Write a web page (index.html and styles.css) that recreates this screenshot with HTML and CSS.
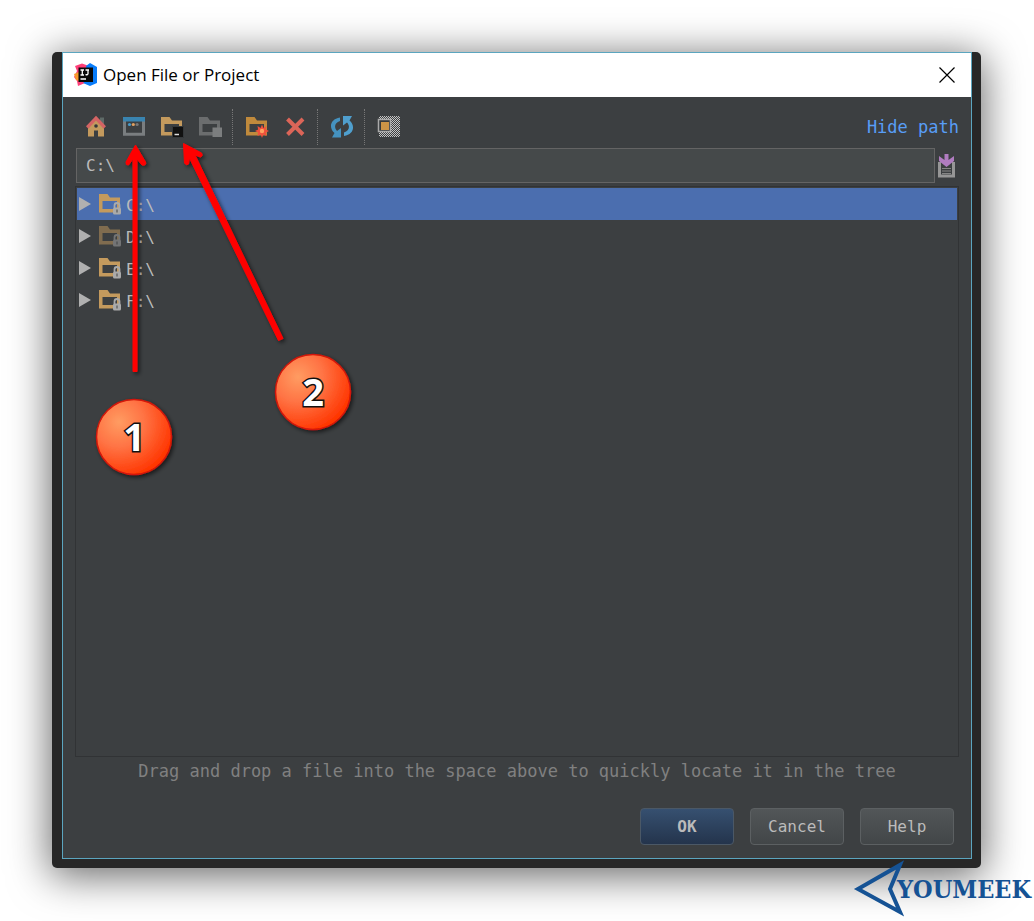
FILE: index.html
```html
<!DOCTYPE html>
<html lang="en">
<head>
<meta charset="utf-8">
<title>Open File or Project</title>
<link rel="stylesheet" href="styles.css">
</head>
<body>
<svg class="defs" aria-hidden="true">
  <defs>
    <symbol id="folder" viewBox="0 0 24 24">
      <path fill-rule="evenodd" d="M1 2H9.500L12 5.500H22V20.500H1ZM4.500 9V17H19V9Z"/>
    </symbol>
    <symbol id="lock" viewBox="0 0 10 13">
      <path d="M2.500 6V3.500a2.300 2.300 0 0 1 5 0V6" fill="none" stroke="#aaa" stroke-width="1.800"/>
      <rect x="1" y="5.500" width="8" height="7" rx="1.500" fill="#aaa"/>
      <path d="M5 7.500v3" stroke="#666" stroke-width="1.500"/>
    </symbol>
    <symbol id="drive" viewBox="0 0 24 24">
      <use href="#folder" width="24" height="24" fill="#c49a5d"/>
      <use href="#lock" x="14" y="10" width="10" height="13"/>
    </symbol>
  </defs>
</svg>

<main class="frame">
  <section class="dialog" aria-labelledby="title">
    <header class="titlebar">
      <svg class="app-icon" viewBox="0 0 24 24" aria-hidden="true">
        <path d="M1 3L8 0.500L15 3L11 20L4 23L3 18L0 14L3 8Z" fill="#fe3f78"/>
        <path d="M0 11L5 9V18L2 17Z" fill="#f79a2c"/>
        <path d="M12 3L16 0L23 4V20L16 23L9 20L14 16Z" fill="#087cfa"/>
        <rect x="4.500" y="4.500" width="14.500" height="14.500" fill="#080808"/>
        <path d="M6.500 7H10M8.300 7V12M6.500 12H10M11.500 7H15M14 7V10.500Q14 12 11.500 11.700M6.500 16H12" stroke="#fff" stroke-width="1.300" fill="none"/>
      </svg>
      <h1 id="title">Open File or Project</h1>
      <button class="close" aria-label="Close">
        <svg viewBox="0 0 16 16"><path d="M0.500 0.500L15.500 15.500M15.500 0.500L0.500 15.500" stroke="#000" stroke-width="1.200"/></svg>
      </button>
    </header>

    <div class="toolbar">
      <button aria-label="Home"><svg viewBox="0 0 24 24">
        <path d="M16 2.500h4v8h-4z" fill="#5f6b68"/>
        <path d="M4 12L12 4L20 12V21.500H14V15.500H10V21.500H4Z" fill="#c49a5d"/>
        <circle cx="12" cy="11" r="1.800" fill="#34393b"/>
        <path d="M3.200 12.500L12 3.200L20.800 12.500" fill="none" stroke="#d46464" stroke-width="3.300"/>
      </svg></button>
      <button aria-label="Desktop"><svg viewBox="0 0 24 24">
        <path d="M2.500 6V19.300H21.500V6" fill="none" stroke="#7a7e80" stroke-width="3"/>
        <path d="M1 2h22v4.500H1z" fill="#3984b0"/>
        <circle cx="7.500" cy="9.500" r="1.600" fill="#489ac9"/><circle cx="11.300" cy="9.500" r="1.600" fill="#e0a060"/><circle cx="15.100" cy="9.500" r="1.600" fill="#777"/>
      </svg></button>
      <button aria-label="Project directory"><svg viewBox="0 0 24 24">
        <use href="#folder" width="24" height="24" fill="#c49a5d"/>
        <path d="M12.500 11.500h11v11h-11z" fill="#111" stroke="#34383b"/><path d="M14.500 19.500h4.500" stroke="#ddd" stroke-width="1.500"/>
      </svg></button>
      <button aria-label="Module directory" disabled><svg viewBox="0 0 24 24">
        <use href="#folder" width="24" height="24" fill="#6b6d6e"/>
        <path d="M14.500 12.500h9.500v9.500h-9.500z" fill="#7c7e7f"/>
      </svg></button>
      <span class="separator"></span>
      <button aria-label="New folder"><svg viewBox="0 0 24 24">
        <use href="#folder" width="24" height="24" fill="#c08a3c"/>
        <path d="M17 9.500L18.400 13L21.500 11L20.900 14.500L24 16L20.900 17.500L21.500 21L18.400 19.500L17 23L15.600 19.500L12.500 21L13.100 17.500L10 16L13.100 14.500L12.500 11L15.600 13Z" fill="#f0503c"/>
        <circle cx="17" cy="16" r="2.200" fill="#ffa35f"/>
      </svg></button>
      <button aria-label="Delete"><svg viewBox="0 0 24 24">
        <path d="M4.500 4L20 19.500M20 4L4.500 19.500" stroke="#dc6558" stroke-width="4"/>
      </svg></button>
      <span class="separator"></span>
      <button aria-label="Refresh"><svg viewBox="0 0 24 24">
        <path d="M10 2.500C0 4 -1.500 13 4.500 18L2 22.500H11V13L7 16C3.500 12 5 7.500 10 6Z" fill="#4592bf"/>
        <path d="M14 21C24 19.500 25.500 10.500 19.500 5.500L22 1H13V10.500L17 7.500C20.500 11.500 19 16 14 17.500Z" fill="#4f9fce"/>
      </svg></button>
      <span class="separator"></span>
      <button aria-label="Show hidden files"><svg viewBox="0 0 24 24">
        <defs><pattern id="checker" width="2" height="2" patternUnits="userSpaceOnUse"><path d="M0 0h1v1H0zM1 1h1v1H1z" fill="#c4c4c4"/></pattern></defs>
        <path d="M2 1h21v21H2z" fill="url(#checker)"/>
        <path d="M1.500 4.500h12v12h-12z" fill="#35393b" stroke="#aaa" stroke-width="1.500"/>
        <path d="M4 7h8v8H4z" fill="#cb9446"/>
      </svg></button>
      <a class="path-link" href="#path">Hide path</a>
    </div>

    <div class="path-row">
      <input id="path" aria-label="Path" value="C:\">
      <button class="history" aria-label="Recent paths"><svg viewBox="0 0 24 24">
        <path d="M4.500 8V22H18.500V8" fill="none" stroke="#969696" stroke-width="3"/>
        <path d="M7 14.500h9M7 17h9M7 19.500h9" stroke="#858585"/>
        <path d="M9.500 -1h4v7L19 2V7L11.500 13L4 7V2l5.500 4Z" fill="#b07cc0"/>
      </svg></button>
    </div>

    <ul class="tree" aria-label="Drives">
      <li class="selected"><button class="toggle" aria-label="Expand C"></button><svg class="drive" viewBox="0 0 24 24"><use href="#drive"/></svg><span>C:\</span></li>
      <li class="dimmed"><button class="toggle" aria-label="Expand D"></button><svg class="drive" viewBox="0 0 24 24"><use href="#drive"/></svg><span>D:\</span></li>
      <li><button class="toggle" aria-label="Expand E"></button><svg class="drive" viewBox="0 0 24 24"><use href="#drive"/></svg><span>E:\</span></li>
      <li><button class="toggle" aria-label="Expand F"></button><svg class="drive" viewBox="0 0 24 24"><use href="#drive"/></svg><span>F:\</span></li>
    </ul>

    <p class="hint">Drag and drop a file into the space above to quickly locate it in the tree</p>

    <footer class="actions">
      <button class="primary">OK</button>
      <button>Cancel</button>
      <button>Help</button>
    </footer>
  </section>
</main>

<svg class="callouts" width="400" height="500" viewBox="0 0 400 500" role="img" aria-label="Callouts 1 and 2">
  <defs>
    <radialGradient id="ball" cx="0.300" cy="0.300" r="0.750">
      <stop offset="0" stop-color="#ff9c62"/><stop offset="0.450" stop-color="#ff7344"/><stop offset="1" stop-color="#ff3500"/>
    </radialGradient>
    <filter id="drop" x="-20%" y="-20%" width="150%" height="150%"><feDropShadow dx="2" dy="2" stdDeviation="2" flood-color="#000" flood-opacity="0.600"/></filter>
  </defs>
  <g filter="url(#drop)" fill="#f00" stroke="#f00" stroke-linejoin="round" stroke-width="1">
    <path d="M135.500 145L126 162Q125.500 165.500 128.500 165L133 159V371.500H137V159L142 165Q146.500 166 145.500 162Z"/>
    <path d="M183.500 143.500L184.500 163Q186 166 188.500 164L189.500 158L278.500 340.500L283 338.500L195 155L200.500 157Q203.500 156 201.500 153Z"/>
  </g>
  <g filter="url(#drop)" fill="url(#ball)" stroke="#d31808" stroke-width="1.500">
    <circle cx="134" cy="437" r="37.500"/>
    <circle cx="313" cy="392" r="37.500"/>
  </g>
  <g class="numbers">
    <text x="134" y="451">1</text>
    <text x="313" y="406">2</text>
  </g>
</svg>

<svg class="watermark" width="184" height="64" viewBox="0 0 184 64" role="img" aria-label="YOUMEEK">
  <path d="M8 32L50 8L40 32L50 55Z" fill="none" stroke="#155294" stroke-width="4"/>
  <text x="47" y="41">YOUMEEK</text>
</svg>
</body>
</html>
```

FILE: styles.css
```css
* { box-sizing: border-box; }

body {
  position: relative;
  display: flex;
  min-height: 100vh;
  margin: 0;
  padding: 52px 53px 53px 52px;
  background: #fff;
  color: #bbb;
  font: 16px/24px "DejaVu Sans Mono", monospace;
  overflow: hidden;
}

.defs { position: absolute; width: 0; height: 0; }

.frame {
  display: flex;
  flex: 1;
  padding: 0 9px 9px 10px;
  border-radius: 5px;
  background: #272727;
  box-shadow: 0 6px 40px 2px rgba(0, 0, 0, 0.6);
}

.dialog {
  display: flex;
  flex: 1;
  flex-direction: column;
  min-width: 0;
  border: 1px solid #5ba5bf;
  background: #3c3f41;
}

button {
  padding: 0;
  border: 0;
  background: none;
  color: inherit;
  font: inherit;
}

.titlebar {
  display: flex;
  align-items: center;
  height: 44px;
  padding: 0 16px 0 11px;
  background: #fff;
  color: #000;
}

.app-icon { width: 24px; height: 24px; }

h1 {
  flex: 1;
  margin: 0 0 0 5px;
  font: 17px/24px "Open Sans", "Noto Sans", sans-serif;
}

.close { display: flex; }
.close svg { width: 16px; height: 16px; }

.toolbar {
  display: flex;
  align-items: center;
  height: 51px;
  padding: 8px 12px 0 14px;
}

.toolbar button { display: flex; justify-content: center; width: 38px; }
.toolbar svg, .history svg { width: 24px; height: 24px; }

.separator {
  width: 1px;
  height: 36px;
  margin: 0 5px 0 3px;
  border-left: 1px dotted #777;
}

.path-link {
  margin-left: auto;
  color: #589df6;
  font-size: 17px;
  text-decoration: none;
}

.path-row { display: flex; align-items: center; padding: 0 12px 0 13px; }

.path-row input {
  flex: 1;
  min-width: 0;
  height: 35px;
  padding: 0 9px;
  border: 1px solid #646464;
  background: #45494a;
  color: #bbb;
  font: inherit;
}

.history { display: flex; }

.tree {
  flex: 1;
  margin: 3px 12px 0;
  padding: 1px;
  border: 1px solid #313335;
  list-style: none;
}

.tree li { display: flex; align-items: center; height: 32px; }
.tree span { margin-left: 4px; padding-top: 3px; }
.tree .selected { background: #4b6eaf; }
.drive { width: 24px; height: 24px; margin-left: 7px; }
.dimmed .drive { opacity: 0.5; }

.toggle {
  width: 12px;
  height: 14px;
  margin-left: 2px;
  background: #b0b0b0;
  clip-path: polygon(0 0, 100% 50%, 0 100%);
}

.hint {
  margin: 2px 12px 0;
  color: #808080;
  font-size: 17px;
  text-align: center;
}

.actions {
  display: flex;
  justify-content: flex-end;
  gap: 16px;
  padding: 25px 17px 13px;
}

.actions button {
  width: 94px;
  height: 37px;
  border: 1px solid #5c6062;
  border-radius: 4px;
  background: linear-gradient(#525658, #424648);
}

.actions .primary {
  border-color: #4b5866;
  background: linear-gradient(#365070, #24344c);
  font-weight: bold;
}

.callouts { position: absolute; top: 0; left: 0; pointer-events: none; }

.numbers {
  fill: #fff;
  stroke: #111;
  stroke-width: 3px;
  paint-order: stroke;
  font: bold 38px "Open Sans", "Noto Sans", sans-serif;
  text-anchor: middle;
}

.watermark { position: absolute; right: 0; bottom: 0; }

.watermark text {
  fill: #155294;
  font: bold 25px "DejaVu Serif Condensed", "DejaVu Serif", serif;
}
```
